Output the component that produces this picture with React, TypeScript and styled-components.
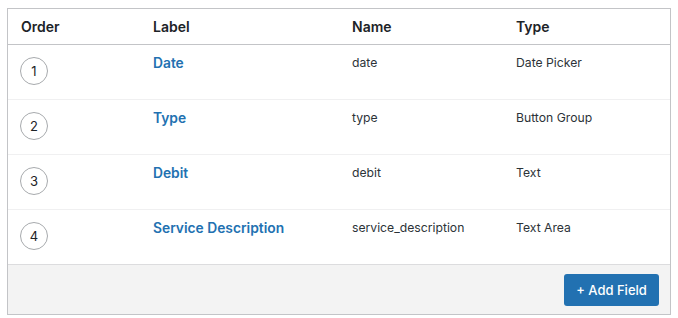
import React from "react";
import styled, { createGlobalStyle } from "styled-components";

const Global = createGlobalStyle`
  html, body { margin: 0; padding: 0; background: #fff; }
  body { font-family: Inter, "Noto Sans", sans-serif; color: #1d2327; }
`;

const Wrap = styled.div`
  padding: 8px 8px 4px 7px;
`;

const Panel = styled.div`
  border: 1px solid #c3c4c7;
  background: #fff;
  width: 664px;
  box-sizing: border-box;
`;

const Grid = `
  display: grid;
  grid-template-columns: 132px 199px 164px 1fr;
`;

const HeadRow = styled.div`
  ${Grid}
  height: 35px;
  align-items: center;
  border-bottom: 1px solid #c3c4c7;
`;

const HeadCell = styled.div`
  font-size: 14px;
  font-weight: 600;
  color: #1d2327;
  padding-left: 13px;
`;

const Row = styled.div<{ $last?: boolean }>`
  ${Grid}
  height: 55px;
  box-sizing: border-box;
  border-bottom: 1px solid ${(p) => (p.$last ? "#dcdcde" : "#f0f0f1")};
`;

const Cell = styled.div`
  padding: 8px 0 0 13px;
  font-size: 12.2px;
  line-height: 20px;
  color: #2c3338;
`;

const OrderCell = styled.div`
  padding: 12px 0 0 12px;
`;

const Circle = styled.div`
  width: 28px;
  height: 28px;
  border: 1px solid #a7aaad;
  border-radius: 50%;
  box-sizing: border-box;
  display: flex;
  align-items: center;
  justify-content: center;
  font-size: 13px;
  color: #1d2327;
`;

const LabelLink = styled.a`
  font-size: 13.8px;
  font-weight: 600;
  color: #2271b1;
  text-decoration: none;
  line-height: 20px;
`;

const Footer = styled.div`
  background: #f3f3f3;
  height: 49px;
  display: flex;
  justify-content: flex-end;
  align-items: flex-end;
  padding: 0 11px 8px 0;
  box-sizing: border-box;
`;

const Button = styled.button`
  background: #2271b1;
  color: #fff;
  border: none;
  border-radius: 3px;
  height: 32px;
  width: 95px;
  padding: 0;
  font-family: Inter, "Noto Sans", sans-serif;
  font-size: 13px;
  font-weight: 500;
`;

const rows = [
  { label: "Date", name: "date", type: "Date Picker" },
  { label: "Type", name: "type", type: "Button Group" },
  { label: "Debit", name: "debit", type: "Text" },
  { label: "Service Description", name: "service_description", type: "Text Area" },
];

export default function App() {
  return (
    <Wrap>
      <Global />
      <Panel>
        <HeadRow>
          <HeadCell>Order</HeadCell>
          <HeadCell>Label</HeadCell>
          <HeadCell>Name</HeadCell>
          <HeadCell>Type</HeadCell>
        </HeadRow>
        {rows.map((r, i) => (
          <Row key={r.name} $last={i === rows.length - 1}>
            <OrderCell>
              <Circle>{i + 1}</Circle>
            </OrderCell>
            <Cell>
              <LabelLink href="#">{r.label}</LabelLink>
            </Cell>
            <Cell>{r.name}</Cell>
            <Cell>{r.type}</Cell>
          </Row>
        ))}
        <Footer>
          <Button>+ Add Field</Button>
        </Footer>
      </Panel>
    </Wrap>
  );
}
